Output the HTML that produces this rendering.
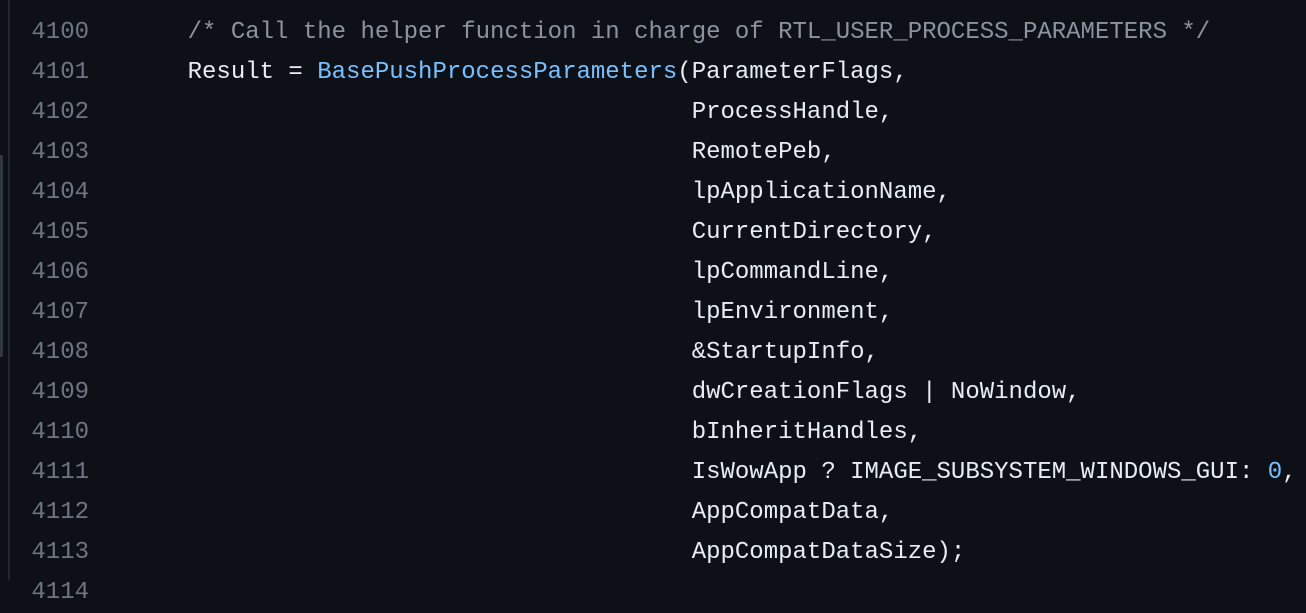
<!DOCTYPE html>
<html><head><style>
html,body{margin:0;padding:0;background:#0d1117;width:1306px;height:580px;overflow:hidden}
.wrap{position:absolute;left:0;top:-27px}
.l{height:40px;line-height:40px;font-family:"Liberation Mono",monospace;font-size:24px;white-space:pre;position:relative}
.n{position:absolute;left:0;width:89px;text-align:right;color:#6e7681}
.c{position:absolute;left:130px;color:#e6edf3}
.cm{color:#8b949e}.f{color:#79c0ff}.k{color:#79c0ff}
.vl{position:absolute;left:8px;top:0;width:2px;height:580px;background:#21262d}
.sb{position:absolute;left:0;top:155px;width:3px;height:202px;background:#30363d;border-radius:0 2px 2px 0}
</style></head><body>
<div class="vl"></div><div class="sb"></div>
<div class="wrap">
<div class="l"><span class="n">4099</span><span class="c"></span></div>
<div class="l"><span class="n">4100</span><span class="c">    <span class="cm">/* Call the helper function in charge of RTL_USER_PROCESS_PARAMETERS */</span></span></div>
<div class="l"><span class="n">4101</span><span class="c">    Result = <span class="f">BasePushProcessParameters</span>(ParameterFlags,</span></div>
<div class="l"><span class="n">4102</span><span class="c">                                       ProcessHandle,</span></div>
<div class="l"><span class="n">4103</span><span class="c">                                       RemotePeb,</span></div>
<div class="l"><span class="n">4104</span><span class="c">                                       lpApplicationName,</span></div>
<div class="l"><span class="n">4105</span><span class="c">                                       CurrentDirectory,</span></div>
<div class="l"><span class="n">4106</span><span class="c">                                       lpCommandLine,</span></div>
<div class="l"><span class="n">4107</span><span class="c">                                       lpEnvironment,</span></div>
<div class="l"><span class="n">4108</span><span class="c">                                       &amp;StartupInfo,</span></div>
<div class="l"><span class="n">4109</span><span class="c">                                       dwCreationFlags | NoWindow,</span></div>
<div class="l"><span class="n">4110</span><span class="c">                                       bInheritHandles,</span></div>
<div class="l"><span class="n">4111</span><span class="c">                                       IsWowApp ? IMAGE_SUBSYSTEM_WINDOWS_GUI: <span class="k">0</span>,</span></div>
<div class="l"><span class="n">4112</span><span class="c">                                       AppCompatData,</span></div>
<div class="l"><span class="n">4113</span><span class="c">                                       AppCompatDataSize);</span></div>
<div class="l"><span class="n">4114</span><span class="c"></span></div>
</div>
</body></html>
